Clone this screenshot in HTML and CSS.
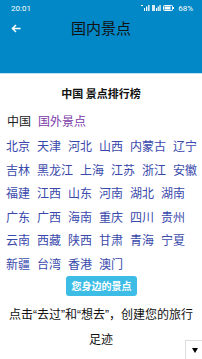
FILE: index.html
```html
<!DOCTYPE html>
<html lang="zh-CN">
<head>
<meta charset="utf-8">
<link rel="stylesheet" href="styles.css">
</head>
<body>
<div class="app">
  <header class="appbar">
    <div class="status">
      <span class="time">20:01</span>
      <span class="status-icons">
        <svg class="sig" width="9" height="6" viewBox="0 0 9 6"><rect x="0" y="0" width="2" height="1" fill="#fff"/><rect x="3" y="3" width="1" height="3" fill="#fff"/><rect x="5" y="1.5" width="1.3" height="4.5" fill="#fff"/><rect x="7.2" y="0" width="1.3" height="6" fill="#fff"/></svg>
        <svg class="sig" width="9" height="6" viewBox="0 0 9 6"><rect x="0" y="0" width="3" height="6" fill="#fff" opacity=".85"/><rect x="4" y="3" width="1" height="3" fill="#fff"/><rect x="5.6" y="1.5" width="1.2" height="4.5" fill="#fff"/><rect x="7.4" y="0" width="1.3" height="6" fill="#fff"/></svg>
        <svg class="bat" width="11" height="6" viewBox="0 0 11 6"><rect x="0.5" y="0.5" width="9" height="5" rx="1" fill="none" stroke="#fff"/><rect x="1.5" y="1.5" width="6" height="3" fill="#fff"/><rect x="10" y="2" width="1" height="2" fill="#fff"/></svg>
        <span class="pct">68%</span>
      </span>
    </div>
    <div class="toolbar">
      <svg class="back" width="10" height="9" viewBox="0 0 10 9"><path d="M9.5 4.5H1.5M5 1L1.5 4.5L5 8" fill="none" stroke="#fff" stroke-width="1.5"/></svg>
      <h1 class="title">国内景点</h1>
    </div>
  </header>

  <main class="content">
    <h2 class="rank-title">中国 景点排行榜</h2>
    <div class="tabs">
      <span class="tab">中国</span>
      <span class="tab tab-alt">国外景点</span>
    </div>
    <div class="regions">
      <span>北京</span><span>天津</span><span>河北</span><span>山西</span><span>内蒙古</span><span>辽宁</span>
      <span>吉林</span><span>黑龙江</span><span>上海</span><span>江苏</span><span>浙江</span><span>安徽</span>
      <span>福建</span><span>江西</span><span>山东</span><span>河南</span><span>湖北</span><span>湖南</span>
      <span>广东</span><span>广西</span><span>海南</span><span>重庆</span><span>四川</span><span>贵州</span>
      <span>云南</span><span>西藏</span><span>陕西</span><span>甘肃</span><span>青海</span><span>宁夏</span>
      <span>新疆</span><span>台湾</span><span>香港</span><span>澳门</span>
    </div>
    <div class="btn-wrap"><button class="nearby">您身边的景点</button></div>
    <p class="hint">点击“去过”和“想去”，创建您的旅行足迹</p>
  </main>
  <div class="dropdown"><span class="tri"></span></div>
</div>
</body>
</html>
```
FILE: styles.css
```css
* { box-sizing: border-box; }
html, body { margin: 0; padding: 0; }
body {
  width: 202px;
  height: 359px;
  overflow: hidden;
  background: #fff;
  font-family: "Noto Sans CJK SC", "Noto Sans", sans-serif;
}
.app { position: relative; width: 202px; height: 359px; }
.appbar {
  background: #0288c6;
  height: 74px;
  border-bottom: 1px solid #bfe0f0;
}
.status {
  height: 16px;
  display: flex;
  align-items: center;
  justify-content: space-between;
  padding: 0 9px 0 11px;
  color: #fff;
  font-family: "Roboto", sans-serif;
  font-size: 8px;
}
.status-icons { display: flex; align-items: center; gap: 2px; }
.pct { margin-left: 2px; font-size: 8px; }
.toolbar {
  height: 24px;
  display: flex;
  align-items: center;
  position: relative;
  padding-left: 11px;
}
.title {
  margin: 0;
  flex: 1;
  text-align: center;
  margin-right: 21px;
  font-size: 15px;
  font-weight: 400;
  color: #111;
  line-height: 24px;
}
.content { padding: 0; }
.rank-title {
  margin: 9px 0 0;
  text-align: center;
  font-size: 11px;
  font-weight: 700;
  line-height: 20px;
  color: #111;
}
.tabs {
  margin-top: 8px;
  padding-left: 7px;
  display: flex;
  gap: 7px;
  font-size: 12px;
  line-height: 20px;
}
.tab { color: #222; }
.tab-alt { color: #7b3aa8; }
.regions {
  margin-top: 3px;
  padding: 0 2px 0 6px;
  display: flex;
  flex-wrap: wrap;
  column-gap: 7px;
  font-size: 12px;
  line-height: 23.6px;
  color: #3949ab;
}
.btn-wrap { display: flex; justify-content: center; }
.nearby {
  margin: 0 0 0 1px;
  border: 0;
  border-radius: 3px;
  background: #3dbde6;
  color: #fff;
  font-family: "Noto Sans CJK SC", sans-serif;
  font-weight: 700;
  font-size: 10px;
  width: 71px;
  height: 20px;
  padding: 0;
  line-height: 20px;
}
.hint {
  margin: 7px 0 0;
  padding: 0 6px;
  text-align: center;
  font-family: "Liberation Sans", "Noto Sans CJK SC", sans-serif;
  font-size: 12px;
  line-height: 25px;
  color: #111;
}
.dropdown {
  position: absolute;
  right: 0;
  bottom: 0;
  width: 17px;
  height: 19px;
  border-left: 1px solid #ddd;
  border-top: 1px solid #ddd;
  display: flex;
  align-items: center;
  justify-content: center;
}
.tri {
  width: 0; height: 0;
  border-left: 3px solid transparent;
  border-right: 3px solid transparent;
  border-top: 5px solid #000;
  margin-left: 2px;
}
```
